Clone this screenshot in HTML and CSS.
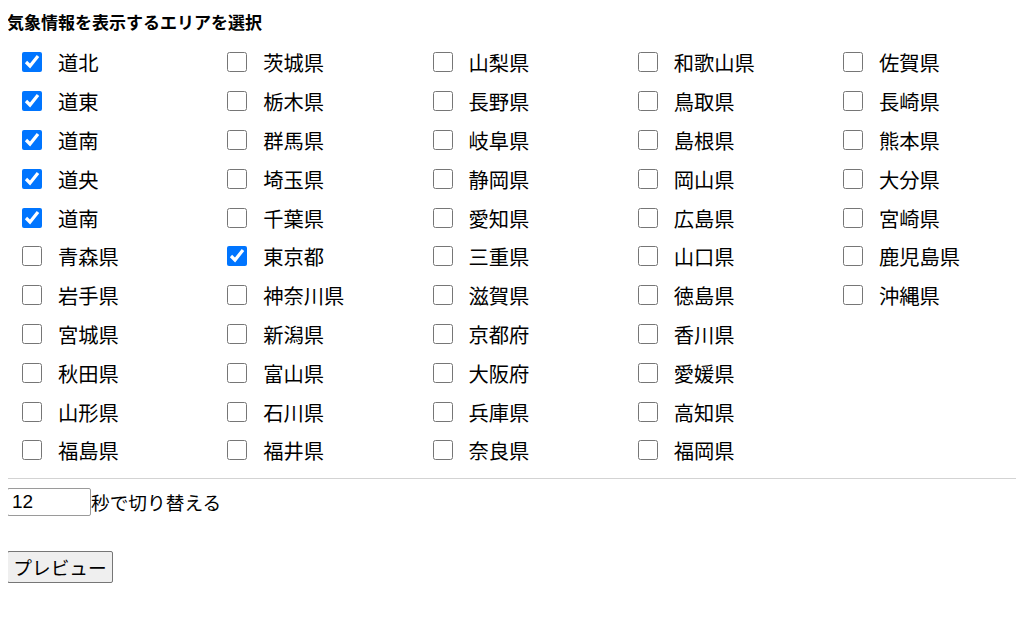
FILE: index.html
```html
<!DOCTYPE html>
<html lang="ja">
<head>
<meta charset="utf-8">
<link rel="stylesheet" href="styles.css">
</head>
<body>
<div class="title">気象情報を表示するエリアを選択</div>
<div class="areas">
  <label class="item"><input type="checkbox" checked><span>道北</span></label>
  <label class="item"><input type="checkbox" checked><span>道東</span></label>
  <label class="item"><input type="checkbox" checked><span>道南</span></label>
  <label class="item"><input type="checkbox" checked><span>道央</span></label>
  <label class="item"><input type="checkbox" checked><span>道南</span></label>
  <label class="item"><input type="checkbox"><span>青森県</span></label>
  <label class="item"><input type="checkbox"><span>岩手県</span></label>
  <label class="item"><input type="checkbox"><span>宮城県</span></label>
  <label class="item"><input type="checkbox"><span>秋田県</span></label>
  <label class="item"><input type="checkbox"><span>山形県</span></label>
  <label class="item"><input type="checkbox"><span>福島県</span></label>

  <label class="item"><input type="checkbox"><span>茨城県</span></label>
  <label class="item"><input type="checkbox"><span>栃木県</span></label>
  <label class="item"><input type="checkbox"><span>群馬県</span></label>
  <label class="item"><input type="checkbox"><span>埼玉県</span></label>
  <label class="item"><input type="checkbox"><span>千葉県</span></label>
  <label class="item"><input type="checkbox" checked><span>東京都</span></label>
  <label class="item"><input type="checkbox"><span>神奈川県</span></label>
  <label class="item"><input type="checkbox"><span>新潟県</span></label>
  <label class="item"><input type="checkbox"><span>富山県</span></label>
  <label class="item"><input type="checkbox"><span>石川県</span></label>
  <label class="item"><input type="checkbox"><span>福井県</span></label>

  <label class="item"><input type="checkbox"><span>山梨県</span></label>
  <label class="item"><input type="checkbox"><span>長野県</span></label>
  <label class="item"><input type="checkbox"><span>岐阜県</span></label>
  <label class="item"><input type="checkbox"><span>静岡県</span></label>
  <label class="item"><input type="checkbox"><span>愛知県</span></label>
  <label class="item"><input type="checkbox"><span>三重県</span></label>
  <label class="item"><input type="checkbox"><span>滋賀県</span></label>
  <label class="item"><input type="checkbox"><span>京都府</span></label>
  <label class="item"><input type="checkbox"><span>大阪府</span></label>
  <label class="item"><input type="checkbox"><span>兵庫県</span></label>
  <label class="item"><input type="checkbox"><span>奈良県</span></label>

  <label class="item"><input type="checkbox"><span>和歌山県</span></label>
  <label class="item"><input type="checkbox"><span>鳥取県</span></label>
  <label class="item"><input type="checkbox"><span>島根県</span></label>
  <label class="item"><input type="checkbox"><span>岡山県</span></label>
  <label class="item"><input type="checkbox"><span>広島県</span></label>
  <label class="item"><input type="checkbox"><span>山口県</span></label>
  <label class="item"><input type="checkbox"><span>徳島県</span></label>
  <label class="item"><input type="checkbox"><span>香川県</span></label>
  <label class="item"><input type="checkbox"><span>愛媛県</span></label>
  <label class="item"><input type="checkbox"><span>高知県</span></label>
  <label class="item"><input type="checkbox"><span>福岡県</span></label>

  <label class="item"><input type="checkbox"><span>佐賀県</span></label>
  <label class="item"><input type="checkbox"><span>長崎県</span></label>
  <label class="item"><input type="checkbox"><span>熊本県</span></label>
  <label class="item"><input type="checkbox"><span>大分県</span></label>
  <label class="item"><input type="checkbox"><span>宮崎県</span></label>
  <label class="item"><input type="checkbox"><span>鹿児島県</span></label>
  <label class="item"><input type="checkbox"><span>沖縄県</span></label>
</div>
<hr class="sep">
<div class="interval"><input class="seconds" type="text" value="12"><span>秒で切り替える</span></div>
<button class="preview" type="button">プレビュー</button>
</body>
</html>
```
FILE: styles.css
```css
html, body {
  background: #ffffff;
}
body {
  margin: 8px;
  font-family: "Noto Sans CJK JP", "Noto Sans", sans-serif;
  color: #000000;
}
.title {
  font-size: 17px;
  font-weight: bold;
  line-height: 28px;
  margin-left: -1px;
}
.areas {
  margin-top: 7px;
  margin-left: 14px;
  display: grid;
  grid-template-columns: repeat(4, 205.25px) 1fr;
  grid-template-rows: repeat(11, 38.8px);
  grid-auto-flow: column;
}
.item {
  display: flex;
  align-items: center;
  gap: 16px;
  font-size: 20.3px;
  white-space: nowrap;
}
.item input {
  width: 20px;
  height: 20px;
  margin: 0;
  accent-color: #0075ff;
}
.sep {
  border: 0;
  border-top: 1px solid #d3d3d3;
  margin: 8px 0 9px 0;
  height: 0;
}
.interval {
  display: flex;
  align-items: center;
  margin-left: -1px;
  font-size: 18.7px;
  height: 28px;
}
.seconds {
  box-sizing: border-box;
  width: 84px;
  height: 28px;
  margin: 0;
  padding: 0 4px;
  border: 1px solid #9a9a9a;
  border-radius: 2px;
  font-family: "Liberation Sans", "Noto Sans CJK JP", sans-serif;
  font-size: 19px;
  color: #000;
}
.preview {
  display: block;
  margin: 35px 0 0 -1px;
  box-sizing: border-box;
  height: 32px;
  width: 106px;
  padding: 0;
  background: #efefef;
  border: 1px solid #767676;
  border-radius: 2px;
  font-family: "Noto Sans CJK JP", sans-serif;
  font-size: 18.7px;
  color: #000;
}
```
